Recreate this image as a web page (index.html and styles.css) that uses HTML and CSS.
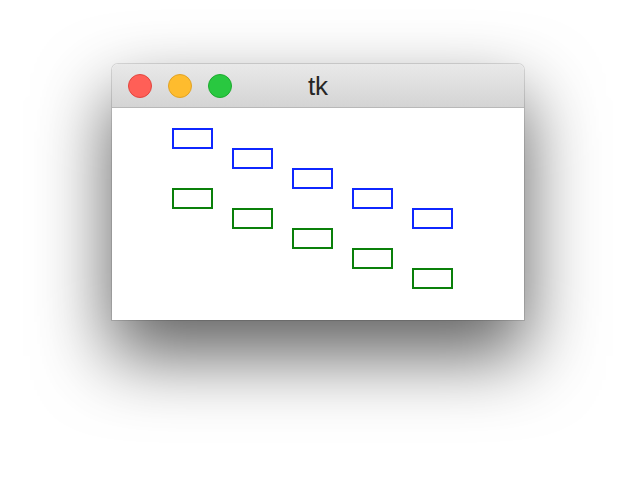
FILE: index.html
```html
<!DOCTYPE html>
<html>
<head>
<meta charset="utf-8">
<link rel="stylesheet" href="styles.css">
</head>
<body>
<div class="desktop">
  <div class="window">
    <div class="titlebar">
      <div class="lights">
        <span class="light red"></span>
        <span class="light yellow"></span>
        <span class="light green"></span>
      </div>
      <div class="title">tk</div>
    </div>
    <div class="content">
      <svg class="canvas" width="412" height="212" viewBox="0 0 412 212">
        <g class="blue">
          <rect x="61" y="21" width="39" height="19"/>
          <rect x="121" y="41" width="39" height="19"/>
          <rect x="181" y="61" width="39" height="19"/>
          <rect x="241" y="81" width="39" height="19"/>
          <rect x="301" y="101" width="39" height="19"/>
        </g>
        <g class="green">
          <rect x="61" y="81" width="39" height="19"/>
          <rect x="121" y="101" width="39" height="19"/>
          <rect x="181" y="121" width="39" height="19"/>
          <rect x="241" y="141" width="39" height="19"/>
          <rect x="301" y="161" width="39" height="19"/>
        </g>
      </svg>
    </div>
  </div>
</div>
</body>
</html>
```
FILE: styles.css
```css
html, body {
  margin: 0;
  padding: 0;
  background: #ffffff;
  width: 636px;
  height: 480px;
  overflow: hidden;
}
.desktop {
  padding: 64px 0 0 112px;
}
.window {
  width: 412px;
  border-radius: 6px 6px 0 0;
  box-shadow: 0 0 0 1px rgba(0,0,0,0.12), 0 34px 72px 2px rgba(0,0,0,0.62);
  background: #ffffff;
}
.titlebar {
  position: relative;
  height: 43px;
  border-bottom: 1px solid #b8b8b8;
  border-radius: 6px 6px 0 0;
  background: linear-gradient(#e9e9e9, #d4d4d4);
  display: flex;
  align-items: center;
}
.lights {
  display: flex;
  gap: 16px;
  padding-left: 16px;
}
.light {
  width: 22px;
  height: 22px;
  border-radius: 50%;
  border: 1px solid;
  display: block;
}
.red { background: #ff5f57; border-color: #e2463f; }
.yellow { background: #febc2e; border-color: #e1a325; }
.green { background: #29c840; border-color: #1dab2f; }
.title {
  position: absolute;
  left: 0;
  right: 0;
  top: 7px;
  text-align: center;
  font-family: "Liberation Sans", Arial, sans-serif;
  font-size: 26px;
  color: #262626;
}
.content {
  height: 212px;
  background: #fff;
}
.canvas {
  display: block;
}
.canvas rect {
  fill: none;
  stroke-width: 2;
}
.blue rect { stroke: #0f27ff; }
.green rect { stroke: #0a800a; }
```
